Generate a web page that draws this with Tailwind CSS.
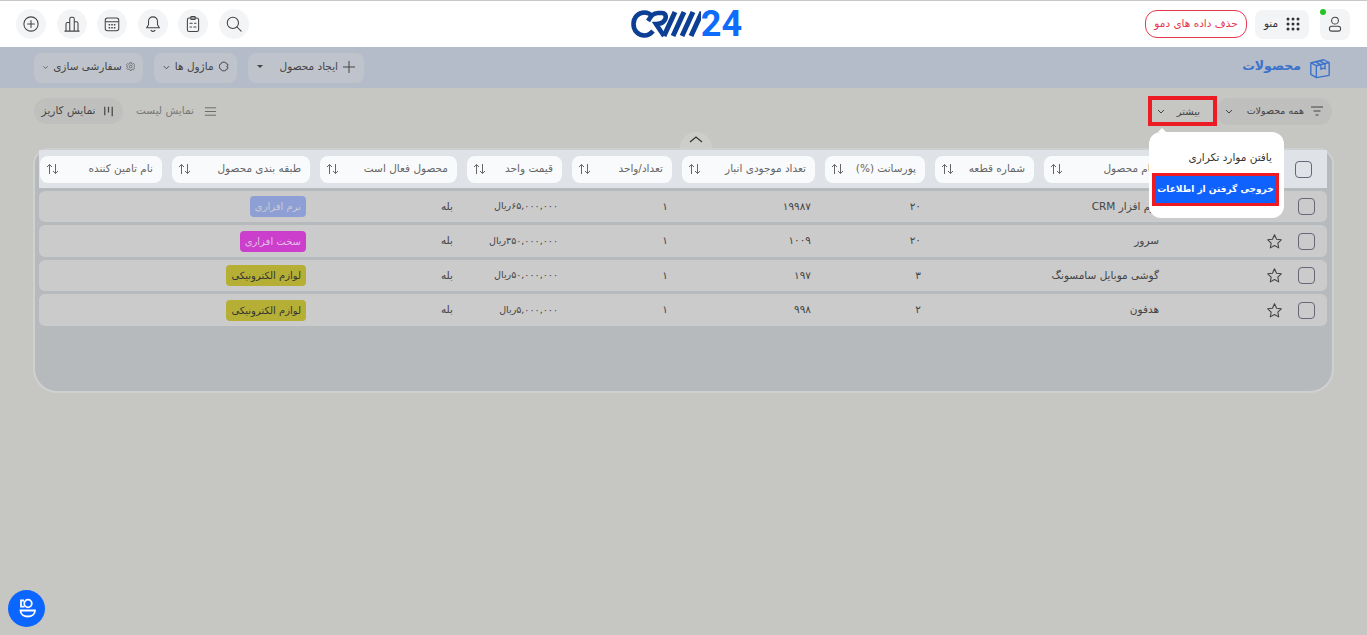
<!DOCTYPE html>
<html lang="fa" dir="rtl">

<head>
	<meta charset="UTF-8">
	<meta name="viewport" content="width=device-width, initial-scale=1.0">
	<title>محصولات</title>
	<script src="https://cdn.jsdelivr.net/npm/@tailwindcss/browser@4"></script>
</head>

<body class="relative h-[635px] overflow-hidden bg-[#c6c6c3] font-['DejaVu_Sans',sans-serif] text-[10.5px] text-[#444]">

	<!-- top bar -->
	<header class="grid h-[47px] grid-cols-[1fr_auto_1fr] items-center border-t border-[#c9c9c9] bg-white pl-4 pr-[17px]">
		<div class="flex items-center gap-2">
			<div class="relative flex h-[31px] w-[30px] items-center justify-center rounded-lg bg-[#f3f4f6]">
				<span class="absolute right-[24px] top-0 h-[6px] w-[6px] rounded-full bg-[#22c522]"></span>
				<svg class="h-[18px] w-[18px]" fill="none" viewBox="0 0 24 24" stroke="#444" stroke-width="1.4">
					<circle cx="12" cy="7.5" r="4.5" />
					<rect x="4.5" y="15" width="15" height="6.5" rx="3.25" />
				</svg>
			</div>
			<div class="mr-[3px] flex h-[29px] w-[54px] items-center justify-center gap-[8px] rounded-lg bg-[#f3f4f6] text-[#333]">
				<svg class="h-[14px] w-[14px]" viewBox="0 0 14 14" fill="#333">
					<circle cx="2" cy="2" r="1.5" /><circle cx="7" cy="2" r="1.5" /><circle cx="12" cy="2" r="1.5" />
					<circle cx="2" cy="7" r="1.5" /><circle cx="7" cy="7" r="1.5" /><circle cx="12" cy="7" r="1.5" />
					<circle cx="2" cy="12" r="1.5" /><circle cx="7" cy="12" r="1.5" /><circle cx="12" cy="12" r="1.5" />
				</svg>
				<span>منو</span>
			</div>
			<button class="flex h-[28px] w-[102px] items-center justify-center rounded-xl border border-[#e5384f] text-[10.5px] whitespace-nowrap text-[#e5384f]">حذف داده های دمو</button>
		</div>

		<div class="flex items-center pl-[7px]" dir="ltr">
			<svg class="h-[28px] w-[70px]" viewBox="0 0 70 28" fill="none" stroke="#0c3f94" stroke-width="4.6">
				<path d="M22 6.5 C19 3.5 16.5 2.5 13.5 2.5 C7 2.5 2.5 7.5 2.5 14 C2.5 20.5 7 25.5 13.5 25.5 C17 25.5 19.5 24 22 21" />
				<path d="M17 11 C20 6 22 3 27 3 L31 3 C35 3 36 8 33 11 C31 13.5 28 14 25 14 L33 26" />
				<path d="M44 2 L33 26 M53 2 L42 26 M62 2 L51 26 M71 2 L60 26" stroke-width="5" />
			</svg>
			<span class="font-['Roboto',sans-serif] text-[36px] font-bold leading-none text-[#0f6bfa]">24</span>
		</div>

		<div class="flex items-center justify-end gap-[10.5px]">
			<div class="flex h-[30px] w-[30px] items-center justify-center rounded-full bg-[#f3f4f6]">
				<svg class="h-[18px] w-[18px]" fill="none" viewBox="0 0 24 24" stroke="#444" stroke-width="1.4" stroke-linecap="round">
					<circle cx="10.5" cy="10.5" r="7.5" /><path d="M16 16l5.5 5.5" />
				</svg>
			</div>
			<div class="flex h-[30px] w-[30px] items-center justify-center rounded-full bg-[#f3f4f6]">
				<svg class="h-[18px] w-[18px]" fill="none" viewBox="0 0 24 24" stroke="#444" stroke-width="1.4" stroke-linecap="round">
					<rect x="4.5" y="4" width="15" height="18" rx="2.5" /><rect x="9" y="2" width="6" height="4" rx="1" />
					<path d="M8 11h3M14 11h2M8 16h2M13 16h3" />
				</svg>
			</div>
			<div class="flex h-[30px] w-[30px] items-center justify-center rounded-full bg-[#f3f4f6]">
				<svg class="h-[18px] w-[18px]" fill="none" viewBox="0 0 24 24" stroke="#444" stroke-width="1.4" stroke-linejoin="round">
					<path d="M12 2.500c-3.500 0-6 2.700-6 6v4.500l-2.500 4h17L18 13V8.500c0-3.300-2.500-6-6-6z" /><path d="M9 20c.6 1.200 1.600 1.800 3 1.800s2.400-.6 3-1.800" />
				</svg>
			</div>
			<div class="flex h-[30px] w-[30px] items-center justify-center rounded-full bg-[#f3f4f6]">
				<svg class="h-[18px] w-[18px]" fill="none" viewBox="0 0 24 24" stroke="#444" stroke-width="1.4">
					<rect x="3" y="4" width="18" height="17" rx="3" /><path d="M3 9h18" />
					<path d="M7.500 13h2M11 13h2M14.500 13h2M7.500 17h2M11 17h2M14.500 17h2" stroke-width="1.800" />
				</svg>
			</div>
			<div class="flex h-[30px] w-[30px] items-center justify-center rounded-full bg-[#f3f4f6]">
				<svg class="h-[18px] w-[18px]" fill="none" viewBox="0 0 24 24" stroke="#444" stroke-width="1.4" stroke-linejoin="round">
					<path d="M2 21.500h20M4 21.500V12a2 2 0 0 1 2-2h3v11.500M9 21.500V5a2 2 0 0 1 2-2h2a2 2 0 0 1 2 2v16.500M15 21.500V9h3a2 2 0 0 1 2 2v10.500" />
				</svg>
			</div>
			<div class="flex h-[30px] w-[30px] items-center justify-center rounded-full bg-[#f3f4f6]">
				<svg class="h-[18px] w-[18px]" fill="none" viewBox="0 0 24 24" stroke="#444" stroke-width="1.4" stroke-linecap="round">
					<circle cx="12" cy="12" r="9.500" /><path d="M12 7.500v9M7.500 12h9" />
				</svg>
			</div>
		</div>
	</header>

	<!-- page title band -->
	<div class="flex h-[41px] items-center justify-between bg-[#b5bcc9] pl-[34px] pr-[36px]">
		<div class="-mt-[3px] flex items-center gap-2 text-[12.5px] font-bold text-[#3a72cc]">
			<svg class="mt-[3px] h-[22px] w-[22px]" fill="none" viewBox="0 0 24 24" stroke="#3a72cc" stroke-width="1.5" stroke-linejoin="round">
				<path d="M2 6.500L16 3l6 3v14l-14 2.500-6-3.500z" /><path d="M8 9.500v13M8 9.500L22 6M8 9.500L2 6.500M7 5l6 3.500v5l2.500-1.500 2 1V7.500L11 4" />
			</svg>
			<span>محصولات</span>
		</div>
		<div class="flex items-center gap-[11px] whitespace-nowrap">
			<div class="flex h-[30px] w-[116px] items-center gap-1 rounded-lg bg-[#bfc3cc] px-2 pb-[2px] text-[10.5px]">
				<svg class="h-[14px] w-[14px]" fill="none" viewBox="0 0 14 14" stroke="#444" stroke-width="1"><path d="M7 1v12M1 7h12" /></svg>
				<span>ایجاد محصول</span>
				<span class="ml-[1px] mr-auto h-0 w-0 border-x-[3px] border-t-[3px] border-x-transparent border-t-[#444]"></span>
			</div>
			<div class="flex h-[30px] w-[83px] items-center gap-1 rounded-lg bg-[#bfc3cc] px-2 pb-[2px] text-[10.5px]">
				<svg class="h-[13px] w-[13px]" fill="none" viewBox="0 0 24 24" stroke="#444" stroke-width="2">
					<path d="M10 3h4a3 3 0 0 1 3 3 4 4 0 0 1 4 4l-3 2 3 2a4 4 0 0 1-4 4 3 3 0 0 1-3 3h-4a3 3 0 0 1-3-3 5 5 0 0 1-4-6 5 5 0 0 1 4-6 3 3 0 0 1 3-3z" />
				</svg>
				<span>ماژول ها</span>
				<svg class="mr-auto h-[10px] w-[10px]" fill="none" viewBox="0 0 10 10" stroke="#444" stroke-width="1"><path d="M2 4l3 3 3-3" /></svg>
			</div>
			<div class="flex h-[30px] w-[109px] items-center gap-1 rounded-lg bg-[#bfc3cc] px-2 pb-[2px] text-[10.5px]">
				<svg class="h-[13px] w-[13px]" fill="none" viewBox="0 0 24 24" stroke="#444" stroke-width="1.500">
					<circle cx="12" cy="12" r="3.500" /><path d="M10 2h4l.6 3 2.600 1.100 2.600-1.700 2.800 2.800-1.700 2.600L22 12.400v0l-1 1.400-.9 1.400 1.700 2.600-2.800 2.800-2.600-1.700-1.400.5-.6 2.600h-4l-.6-2.600-2.600-1.100-2.600 1.700-2.800-2.800 1.700-2.600L3 12.400 2 12l1.100-2.200L1.400 7.200l2.800-2.800 2.600 1.700L9.400 5z" />
				</svg>
				<span>سفارشی سازی</span>
				<svg class="mr-auto h-[10px] w-[10px]" fill="none" viewBox="0 0 10 10" stroke="#444" stroke-width="1"><path d="M2 4l3 3 3-3" /></svg>
			</div>
		</div>
	</div>

	<!-- view filters -->
	<div class="flex items-center justify-between whitespace-nowrap pl-[34px] pr-[35px] pt-[8px]">
		<div class="flex items-center">
			<div class="flex h-[27px] w-[116px] items-center gap-[6px] rounded-full bg-[#bfbfbd] px-2 text-[9.5px]">
				<svg class="h-[14px] w-[14px]" fill="none" viewBox="0 0 14 14" stroke="#444" stroke-width="1.200"><path d="M1 3h12M3.500 7h7M5.500 11h3" /></svg>
				<span>همه محصولات</span>
				<svg class="mr-auto h-[10px] w-[10px]" fill="none" viewBox="0 0 10 10" stroke="#444" stroke-width="1"><path d="M2 4l3 3 3-3" /></svg>
			</div>
			<div class="-mr-px flex h-[30px] w-[69px] items-center border-4 border-[#ed1c24] pl-[4px] pr-[13px] text-[10px]">
				<span>بیشتر</span>
				<svg class="mr-auto h-[10px] w-[10px]" fill="none" viewBox="0 0 10 10" stroke="#444" stroke-width="1"><path d="M2 4l3 3 3-3" /></svg>
			</div>
		</div>
		<div class="flex items-center gap-[13px]">
			<div class="flex items-center gap-[10px] text-[10.5px] text-[#777]">
				<svg class="h-[13px] w-[13px]" fill="none" viewBox="0 0 14 14" stroke="#666" stroke-width="1"><path d="M1 3h12M1 7h12M1 11h12" /></svg>
				<span>نمایش لیست</span>
			</div>
			<div class="flex h-[26px] w-[89px] items-center justify-center gap-[7px] rounded-full bg-[#bfbfbd] text-[10.5px]">
				<svg class="h-[13px] w-[13px]" fill="none" viewBox="0 0 14 14" stroke="#444" stroke-width="1.300"><path d="M3 2v9M7 2v6M11 2v10" /></svg>
				<span>نمایش کاریز</span>
			</div>
		</div>
	</div>

	<!-- collapse toggle -->
	<div class="mt-[6px] flex h-[16px] justify-center pl-[25px]">
		<div class="flex w-[32px] items-center justify-center rounded-t-full bg-[#cdcdca]">
			<svg class="h-[12px] w-[16px]" fill="none" viewBox="0 0 16 12" stroke="#333" stroke-width="1.200"><path d="M2 8l6-5 6 5" /></svg>
		</div>
	</div>

	<!-- table -->
	<div class="mx-[33px] h-[245px] rounded-[24px] rounded-t-[16px] border-2 border-[#cfd1d1] bg-[#b6babd] pl-[4px] pr-[5px]">
		<div id="thead" class="grid h-[38px] grid-cols-[154px_119px_99px_100px_133px_100px_95px_137px_138px_122px] items-center gap-x-[10px] bg-[#dfe3e8] pl-px"></div>
		<div id="tbody" class="mt-[3px] flex flex-col gap-[3px]"></div>
	</div>

	<!-- more menu -->
	<div class="absolute left-[1149px] top-[132px] h-[86px] w-[135px] rounded-xl bg-white">
		<span class="absolute left-[9px] top-[-4px] h-0 w-0 border-x-[4px] border-b-[4px] border-x-transparent border-b-white"></span>
		<div class="pr-[12px] pt-[18px] text-[10.5px] whitespace-nowrap text-[#333]">یافتن موارد تکراری</div>
		<div class="absolute left-[3px] top-[41px] flex h-[33px] w-[127px] items-center justify-center border-[3px] border-[#ed1c24] bg-[#0f62fe] text-[9px] font-bold whitespace-nowrap text-white">خروجی گرفتن از اطلاعات</div>
	</div>

	<!-- support button -->
	<div class="absolute bottom-[8px] left-[8px] flex h-[37px] w-[37px] items-center justify-center rounded-full bg-[#0a66ff]">
		<svg class="h-[24px] w-[24px]" fill="none" viewBox="0 0 24 24" stroke="white" stroke-width="1.800">
			<circle cx="13" cy="6.500" r="3.800" /><path d="M9 3.500H6v6.200h3.500" /><path d="M5.500 13.500h14.500c0 3.500-3 6-7.250 6s-7.250-2.500-7.250-6z" />
		</svg>
	</div>

	<script>
		const heads = ['', 'نام محصول', 'شماره قطعه', 'پورسانت (%)', 'تعداد موجودی انبار', 'تعداد/واحد', 'قیمت واحد', 'محصول فعال است', 'طبقه بندی محصول', 'نام تامین کننده']

		const sortIcon = `<svg class="mr-auto h-[12px] w-[13px] shrink-0" fill="none" viewBox="0 0 13 12" stroke="#666" stroke-width="1"><path d="M3.500 11V1.500M1 4l2.500-2.500L6 4M9.500 1v9.500M7 8l2.500 2.500L12 8" /></svg>`
		const box = `<span class="block h-[17px] w-[17px] rounded-[4px] border border-[#667]"></span>`
		const star = `<svg class="h-[17px] w-[17px]" fill="none" viewBox="0 0 24 24" stroke="#444" stroke-width="1.500" stroke-linejoin="round"><path d="M12 2.500l2.900 6.200 6.700.9-4.900 4.700 1.200 6.700-5.900-3.300-5.900 3.300 1.200-6.700-4.900-4.700 6.700-.9z" /></svg>`

		const rows = [
			{ name: 'نرم افزار CRM', percent: '۲۰', stock: '۱۹۹۸۷', price: '۶۵,۰۰۰,۰۰۰', tag: 'نرم افزاری', color: 'bg-[#8d9fd4] text-[#c9cdd5]', h: 'h-[31px]' },
			{ name: 'سرور', percent: '۲۰', stock: '۱۰۰۹', price: '۳۵۰,۰۰۰,۰۰۰', tag: 'سخت افزاری', color: 'bg-[#cc3fcc] text-[#e6bfe6]', h: 'h-[32px]' },
			{ name: 'گوشی موبایل سامسونگ', percent: '۳', stock: '۱۹۷', price: '۵۰,۰۰۰,۰۰۰', tag: 'لوازم الکترونیکی', color: 'bg-[#b5af36] text-[#333]', h: 'h-[31px]' },
			{ name: 'هدفون', percent: '۲', stock: '۹۹۸', price: '۵,۰۰۰,۰۰۰', tag: 'لوازم الکترونیکی', color: 'bg-[#b5af36] text-[#333]', h: 'h-[32px]' },
		]

		document.getElementById('thead').innerHTML = heads.map((title, i) => i == 0
			? `<div class="pr-[15px]">${box}</div>`
			: `<div class="flex h-[27px] items-center whitespace-nowrap rounded-lg bg-[#f9fafb] pl-[6px] pr-[9px] text-[10.5px] text-[#666]"><span>${title}</span>${sortIcon}</div>`
		).join('')

		document.getElementById('tbody').innerHTML = rows.map(item => `
			<div class="grid ${item.h} grid-cols-[154px_119px_99px_100px_133px_100px_95px_137px_138px_122px] items-center gap-x-[10px] rounded-md bg-[#cbcbcb] pl-px">
				<div class="flex items-center gap-[15px] pr-[12px]">${box}${star}</div>
				<div class="whitespace-nowrap pr-1">${item.name}</div>
				<div></div>
				<div class="pr-1">${item.percent}</div>
				<div class="pr-1">${item.stock}</div>
				<div class="pr-1">۱</div>
				<div class="whitespace-nowrap pr-1 text-[9.5px]">${item.price}ریال</div>
				<div class="pr-1">بله</div>
				<div class="pr-1"><span class="inline-flex h-[21px] items-center whitespace-nowrap rounded-[4px] px-[5px] text-[10px] ${item.color}">${item.tag}</span></div>
				<div></div>
			</div>`).join('')
	</script>
</body>

</html>
